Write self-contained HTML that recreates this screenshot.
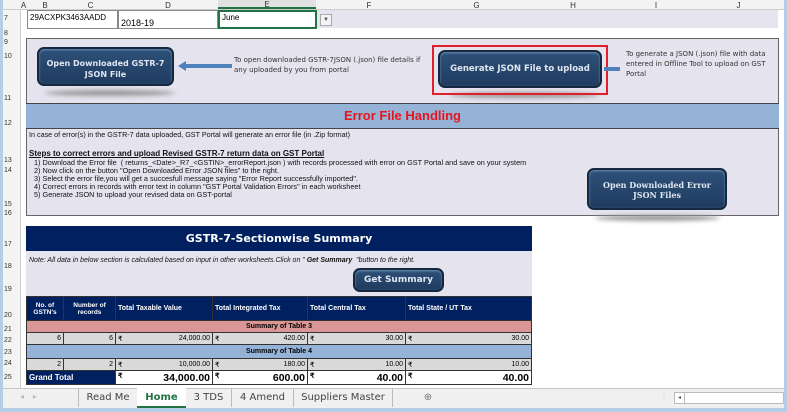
<!DOCTYPE html>
<html><head><style>
*{margin:0;padding:0;box-sizing:border-box}
body{width:787px;height:412px;overflow:hidden;background:#fff;font-family:"Liberation Sans",sans-serif;position:relative}
.a{position:absolute}
.rh{position:absolute;left:4px;width:16px;font-size:7px;color:#333}
.ch{position:absolute;top:1px;font-size:8px;color:#333;text-align:center}
.btn{position:absolute;background:linear-gradient(#2e5078,#1f3c60);border:2px solid #14283f;border-radius:7px;color:#dfe6f0;font-weight:bold;text-align:center;font-family:"DejaVu Sans",sans-serif;box-shadow:inset 0 1px 2px #6f8fb5}
.sh{position:absolute;height:6px;border-radius:50%;background:#999;filter:blur(2px)}
.t td{border:1px solid #333;font-size:7px;height:12px;padding:0 2px}
</style></head><body>
<div class="a" style="left:0;top:0;width:3px;height:412px;background:#b5cde6"></div>
<div class="a" style="left:784px;top:0;width:3px;height:412px;background:#b5cde6"></div>
<div class="a" style="left:0;top:408px;width:787px;height:4px;background:#b5cde6"></div>
<div class="a" style="left:3px;top:0;width:781px;height:10px;background:#f3f3f3;border-bottom:1px solid #ccc"></div>
<div class="a" style="left:3px;top:10px;width:18px;height:398px;background:#f3f3f3;border-right:1px solid #ccc"></div>
<div class="ch" style="left:20px;width:7px">A</div>
<div class="ch" style="left:27px;width:36px">B</div>
<div class="ch" style="left:63px;width:55px">C</div>
<div class="ch" style="left:118px;width:100px">D</div>
<div class="ch" style="left:218px;width:98px;background:#e1e1e1;border-bottom:2px solid #217346;height:9px;top:0">E</div>
<div class="ch" style="left:316px;width:106px">F</div>
<div class="ch" style="left:422px;width:109px">G</div>
<div class="ch" style="left:531px;width:84px">H</div>
<div class="ch" style="left:615px;width:82px">I</div>
<div class="ch" style="left:697px;width:83px">J</div>
<div class="rh" style="top:15px">7</div><div class="rh" style="top:30px">8</div><div class="rh" style="top:39px">9</div><div class="rh" style="top:53px">10</div><div class="rh" style="top:95px">11</div><div class="rh" style="top:120px">12</div><div class="rh" style="top:157px">13</div><div class="rh" style="top:167px">14</div><div class="rh" style="top:201px">15</div><div class="rh" style="top:210px">16</div><div class="rh" style="top:241px">17</div><div class="rh" style="top:263px">18</div><div class="rh" style="top:286px">19</div><div class="rh" style="top:312px">20</div><div class="rh" style="top:326px">21</div><div class="rh" style="top:337px">22</div><div class="rh" style="top:349px">23</div><div class="rh" style="top:360px">24</div><div class="rh" style="top:374px">25</div>
<div class="a" style="left:316px;top:10px;width:462px;height:18px;background:#e6e4ee"></div>
<div class="a" style="left:27px;top:10px;width:91px;height:19px;border:1px solid #888;background:#fff;font-size:8px;padding:2px">29ACXPK3463AADD</div>
<div class="a" style="left:118px;top:10px;width:100px;height:19px;border:1px solid #888;background:#fff;font-size:9px;padding:7px 2px 0">2018-19</div>
<div class="a" style="left:218px;top:10px;width:99px;height:19px;border:2px solid #217346;background:#fff;font-size:8px;padding:1px 2px">June</div>
<div class="a" style="left:320px;top:14px;width:12px;height:12px;border:1px solid #aaa;background:#f4f4f4;font-size:6px;text-align:center;line-height:11px;color:#555">▼</div>
<div class="a" style="left:26px;top:38px;width:753px;height:178px;background:#e5e3ee;border:1px solid #666"></div>
<div class="a" style="left:26px;top:103px;width:753px;height:26px;background:#95b3d7;border-top:1px solid #444;border-bottom:1px solid #444;color:#e8141c;font-weight:bold;font-size:13px;text-align:center;line-height:24px">Error File Handling</div>
<div class="sh" style="left:45px;top:90px;width:130px"></div>
<div class="btn" style="left:37px;top:47px;width:137px;height:39px;font-size:8px;padding-top:9px;line-height:11px">Open Downloaded GSTR-7<br>JSON File</div>
<div class="a" style="left:182px;top:64px;width:50px;height:4px;background:#4f81bd"></div>
<div class="a" style="left:178px;top:61px;width:0;height:0;border-top:5px solid transparent;border-bottom:5px solid transparent;border-right:8px solid #4f81bd"></div>
<div class="a" style="left:234px;top:55px;color:#333;line-height:10px;font-family:'DejaVu Sans',sans-serif;font-size:7px">To open downloaded GSTR-7JSON (.json) file details if<br>any uploaded by you from portal</div>
<div class="sh" style="left:450px;top:92px;width:150px"></div>
<div class="a" style="left:432px;top:45px;width:176px;height:50px;border:2px solid #e0202a"></div>
<div class="btn" style="left:438px;top:50px;width:164px;height:38px;font-size:8.5px;line-height:34px">Generate JSON File to upload</div>
<div class="a" style="left:604px;top:67px;width:16px;height:4px;background:#4f81bd"></div>
<div class="a" style="left:626px;top:49px;font-size:7px;color:#333;line-height:10px;font-family:'DejaVu Sans',sans-serif">To generate a JSON (.json) file with data<br>entered in Offline Tool to upload on GST<br>Portal</div>
<div class="a" style="left:29px;top:130px;font-size:7.2px;color:#111">In case of error(s) in the GSTR-7 data uploaded, GST Portal will generate an error file (in .Zip format)</div>
<div class="a" style="left:29px;top:149px;font-size:8px;font-weight:bold;text-decoration:underline;color:#111">Steps to correct errors and upload Revised GSTR-7 return data on GST Portal</div>
<div class="a" style="left:34px;top:159px;font-size:7.3px;line-height:8px;color:#111">1) Download the Error file &nbsp;( returns_&lt;Date&gt;_R7_&lt;GSTIN&gt;_errorReport.json ) with records processed with error on GST Portal and save on your system<br>2) Now click on the button "Open Downloaded Error JSON files" to the right.<br>3) Select the error file,you will get a succesfull message saying "Error Report successfully imported".<br>4) Correct errors in records with error text in column "GST Portal Validation Errors" in each worksheet<br>5) Generate JSON to upload your revised data on GST-portal</div>
<div class="sh" style="left:595px;top:215px;width:125px"></div>
<div class="btn" style="left:587px;top:168px;width:140px;height:42px;font-size:8px;line-height:10px;padding-top:10px;font-family:'DejaVu Serif',serif">Open Downloaded Error<br>JSON Files</div>
<div class="a" style="left:26px;top:226px;width:506px;height:25px;background:#002060;color:#fff;font-weight:bold;font-size:11px;text-align:center;line-height:25px;font-family:'DejaVu Sans',sans-serif">GSTR-7-Sectionwise Summary</div>
<div class="a" style="left:26px;top:251px;width:506px;height:45px;background:#e5e3ee"></div>
<div class="a" style="left:29px;top:257px;font-size:7px;font-style:italic;color:#111">Note: All data in below section is calculated based on input in other worksheets.Click on " <b>Get Summary</b> &nbsp;"button to the right.</div>
<div class="btn" style="left:353px;top:268px;width:91px;height:24px;font-size:9px;line-height:20px">Get Summary</div>
<table class="t a" style="left:26px;top:296px;width:506px;border-collapse:collapse">
<tr style="background:#002060;color:#fff;font-weight:bold;height:24px"><td style="width:37px;text-align:center;font-size:6.5px">No. of GSTN's</td><td style="width:52px;text-align:center;font-size:6.5px">Number of records</td><td style="width:97px">Total Taxable Value</td><td style="width:95px">Total Integrated Tax</td><td style="width:98px">Total Central Tax</td><td>Total State / UT Tax</td></tr>
<tr style="background:#da9694;font-weight:bold"><td colspan="6" style="text-align:center">Summary of Table 3</td></tr>
<tr style="background:#d9d9d9;text-align:right"><td>6</td><td>6</td><td><span style="float:left">₹</span>24,000.00</td><td><span style="float:left">₹</span>420.00</td><td><span style="float:left">₹</span>30.00</td><td><span style="float:left">₹</span>30.00</td></tr>
<tr style="background:#95b3d7;font-weight:bold"><td colspan="6" style="text-align:center;height:14px">Summary of Table 4</td></tr>
<tr style="background:#d9d9d9;text-align:right"><td>2</td><td>2</td><td><span style="float:left">₹</span>10,000.00</td><td><span style="float:left">₹</span>180.00</td><td><span style="float:left">₹</span>10.00</td><td><span style="float:left">₹</span>10.00</td></tr>
<tr style="font-weight:bold;text-align:right;height:14px"><td colspan="2" style="background:#002060;color:#fff;text-align:left;font-size:8px">Grand Total</td><td style="font-size:10.5px"><span style="float:left;font-size:7px">₹</span>34,000.00</td><td style="font-size:10.5px"><span style="float:left;font-size:7px">₹</span>600.00</td><td style="font-size:10.5px"><span style="float:left;font-size:7px">₹</span>40.00</td><td style="font-size:10.5px"><span style="float:left;font-size:7px">₹</span>40.00</td></tr>
</table>
<div class="a" style="left:3px;top:388px;width:781px;height:20px;background:#f0f0f0;border-top:1px solid #c6c6c6"></div>
<div class="a" style="left:20px;top:392px;font-size:8px;color:#bbb">◂ &nbsp;&nbsp;&nbsp;▸</div>
<div class="a" style="left:78px;top:388px;height:20px;font-size:10px;color:#444;line-height:19px;font-family:'DejaVu Sans',sans-serif">
<span class="a" style="left:0;width:59px;text-align:center;border-left:1px solid #bbb">Read Me</span>
<span class="a" style="left:59px;width:49px;text-align:center;background:#fff;color:#217346;font-weight:bold;border-bottom:2px solid #217346;height:20px">Home</span>
<span class="a" style="left:108px;width:46px;text-align:center;border-right:1px solid #bbb">3 TDS</span>
<span class="a" style="left:154px;width:62px;text-align:center;border-right:1px solid #bbb">4 Amend</span>
<span class="a" style="left:216px;width:99px;text-align:center;border-right:1px solid #bbb;white-space:nowrap">Suppliers Master</span>
<span class="a" style="left:342px;width:16px;text-align:center;color:#777">⊕</span></div>
<div class="a" style="left:660px;top:392px;font-size:8px;color:#bbb">⋮</div>
<div class="a" style="left:674px;top:392px;width:110px;height:12px;background:#fff;border:1px solid #bbb"></div>
<div class="a" style="left:674px;top:392px;width:11px;height:12px;border:1px solid #bbb;font-size:6px;text-align:center;line-height:10px;color:#555">◂</div>
</body></html>
